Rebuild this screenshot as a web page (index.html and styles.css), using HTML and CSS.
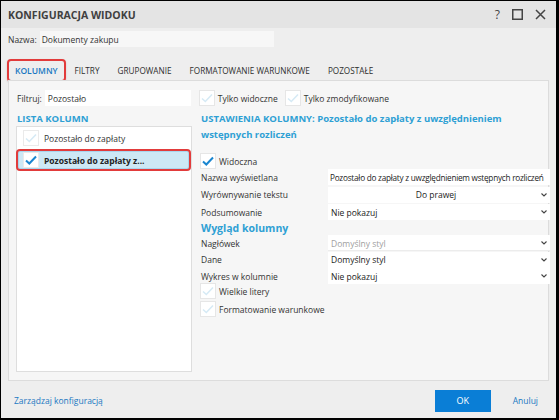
FILE: index.html
```html
<!DOCTYPE html>
<html lang="pl">
<head>
<meta charset="utf-8">
<link rel="stylesheet" href="styles.css">
</head>
<body>
<div class="dialog">
  <div class="titlebar">
    <div class="title">KONFIGURACJA WIDOKU</div>
    <div class="controls">
      <span class="ctl help">?</span>
      <svg class="ctl" width="11" height="11" viewBox="0 0 11 11"><rect x="0.75" y="0.75" width="9.5" height="9.5" fill="none" stroke="#444" stroke-width="1.5"/></svg>
      <svg class="ctl" width="11" height="11" viewBox="0 0 11 11"><path d="M1 1L10 10M10 1L1 10" stroke="#444" stroke-width="1.5"/></svg>
    </div>
  </div>

  <div class="name-row">
    <span class="lbl">Nazwa:</span>
    <div class="name-input">Dokumenty zakupu</div>
  </div>

  <div class="tabs">
    <div class="tab active">KOLUMNY</div>
    <div class="tab">FILTRY</div>
    <div class="tab">GRUPOWANIE</div>
    <div class="tab">FORMATOWANIE WARUNKOWE</div>
    <div class="tab">POZOSTAŁE</div>
  </div>

  <div class="panel">
    <div class="filter-row">
      <span class="lbl">Filtruj:</span>
      <div class="filter-input">Pozostało</div>
      <div class="chk-wrap first">
        <span class="chk"><svg width="12" height="10" viewBox="0 0 12 10"><path d="M1 5.5L4.3 8.5L11 1.5" fill="none" stroke="#d6eaf5" stroke-width="1.6"/></svg></span>
        <span class="lbl">Tylko widoczne</span>
      </div>
      <div class="chk-wrap">
        <span class="chk"><svg width="12" height="10" viewBox="0 0 12 10"><path d="M1 5.5L4.3 8.5L11 1.5" fill="none" stroke="#d6eaf5" stroke-width="1.6"/></svg></span>
        <span class="lbl">Tylko zmodyfikowane</span>
      </div>
    </div>

    <div class="columns">
      <div class="left">
        <div class="section-title">LISTA KOLUMN</div>
        <div class="list">
          <div class="item">
            <span class="chk"><svg width="12" height="10" viewBox="0 0 12 10"><path d="M1 5.5L4.3 8.5L11 1.5" fill="none" stroke="#d6eaf5" stroke-width="1.6"/></svg></span>
            <span>Pozostało do zapłaty</span>
          </div>
          <div class="item selected">
            <span class="chk"><svg width="12" height="10" viewBox="0 0 12 10"><path d="M1 5.5L4.3 8.5L11 1.5" fill="none" stroke="#1a86d0" stroke-width="2"/></svg></span>
            <span>Pozostało do zapłaty z...</span>
          </div>
        </div>
      </div>

      <div class="right">
        <div class="settings-title">USTAWIENIA KOLUMNY: Pozostało do zapłaty z uwzględnieniem wstępnych rozliczeń</div>
        <div class="chk-wrap visible">
          <span class="chk"><svg width="12" height="10" viewBox="0 0 12 10"><path d="M1 5.5L4.3 8.5L11 1.5" fill="none" stroke="#1a86d0" stroke-width="2"/></svg></span>
          <span class="lbl">Widoczna</span>
        </div>
        <div class="form">
          <div class="flabel">Nazwa wyświetlana</div>
          <div class="field text tight">Pozostało do zapłaty z uwzględnieniem wstępnych rozliczeń</div>
          <div class="flabel">Wyrównywanie tekstu</div>
          <div class="field select center"><span class="val">Do prawej</span><svg class="chev" width="6" height="4" viewBox="0 0 6 4"><path d="M0.5 0.5L3 3L5.5 0.5" fill="none" stroke="#444" stroke-width="1.1"/></svg></div>
          <div class="flabel">Podsumowanie</div>
          <div class="field select"><span class="val">Nie pokazuj</span><svg class="chev" width="6" height="4" viewBox="0 0 6 4"><path d="M0.5 0.5L3 3L5.5 0.5" fill="none" stroke="#444" stroke-width="1.1"/></svg></div>
        </div>
        <div class="sub-title">Wygląd kolumny</div>
        <div class="form form2">
          <div class="flabel">Nagłówek</div>
          <div class="field select disabled"><span class="val">Domyślny styl</span><svg class="chev" width="6" height="4" viewBox="0 0 6 4"><path d="M0.5 0.5L3 3L5.5 0.5" fill="none" stroke="#444" stroke-width="1.1"/></svg></div>
          <div class="flabel">Dane</div>
          <div class="field select"><span class="val">Domyślny styl</span><svg class="chev" width="6" height="4" viewBox="0 0 6 4"><path d="M0.5 0.5L3 3L5.5 0.5" fill="none" stroke="#444" stroke-width="1.1"/></svg></div>
          <div class="flabel">Wykres w kolumnie</div>
          <div class="field select"><span class="val">Nie pokazuj</span><svg class="chev" width="6" height="4" viewBox="0 0 6 4"><path d="M0.5 0.5L3 3L5.5 0.5" fill="none" stroke="#444" stroke-width="1.1"/></svg></div>
        </div>
        <div class="chk-wrap opt first-opt">
          <span class="chk"><svg width="12" height="10" viewBox="0 0 12 10"><path d="M1 5.5L4.3 8.5L11 1.5" fill="none" stroke="#d6eaf5" stroke-width="1.6"/></svg></span>
          <span class="lbl">Wielkie litery</span>
        </div>
        <div class="chk-wrap opt">
          <span class="chk"><svg width="12" height="10" viewBox="0 0 12 10"><path d="M1 5.5L4.3 8.5L11 1.5" fill="none" stroke="#d6eaf5" stroke-width="1.6"/></svg></span>
          <span class="lbl">Formatowanie warunkowe</span>
        </div>
      </div>
    </div>
  </div>

  <div class="footer">
    <a class="link">Zarządzaj konfiguracją</a>
    <div class="buttons">
      <div class="ok">OK</div>
      <a class="link cancel">Anuluj</a>
    </div>
  </div>
</div>
</body>
</html>
```

FILE: styles.css
```css
* { box-sizing: border-box; }
html, body { margin: 0; padding: 0; }
body { width: 559px; height: 420px; overflow: hidden; background: #fff; }

.dialog {
  width: 559px;
  height: 420px;
  border: 1px solid #000;
  border-right-width: 3px;
  border-bottom-width: 2px;
  background: #eeeeee;
  display: flex;
  flex-direction: column;
  font-family: "Open Sans", "Noto Sans", sans-serif;
  font-size: 8.5px;
  color: #333;
}

.titlebar {
  height: 27px;
  flex: none;
  background: #e4e4e4;
  display: flex;
  align-items: center;
  justify-content: space-between;
  padding: 0 10px 0 7px;
}
.title { font-weight: 700; font-size: 10.5px; color: #404040; }
.controls { display: flex; align-items: center; gap: 12px; }
.ctl.help { font-size: 12px; color: #444; line-height: 11px; }

.name-row {
  display: flex;
  align-items: center;
  padding: 3px 7px 0;
  height: 19px;
}
.name-input {
  margin-left: 3px;
  width: 234px;
  height: 16px;
  background: #f7f7f7;
  display: flex;
  align-items: center;
  padding-left: 2px;
}
.lbl { color: #333; }

.tabs {
  display: flex;
  align-items: center;
  margin-top: 12px;
  padding-left: 6px;
  height: 23px;
}
.tab {
  height: 23px;
  display: flex;
  align-items: center;
  padding: 0 9px;
  font-size: 8.2px;
  color: #2e2e2e;
}
.tab.active {
  color: #1a78c2;
  font-weight: 600;
  font-size: 8.5px;
  border: 2px solid #e23b3b;
  border-radius: 4px;
  box-shadow: 0 1px 2px rgba(0,0,0,0.15);
  padding: 0 6px;
}

.panel {
  margin: -2px 7px 0;
  height: 301px;
  border: 1px solid #dcdcdc;
  background: #f6f6f6;
  padding: 9px 0 0 8px;
  display: flex;
  flex-direction: column;
}

.filter-row { display: flex; align-items: center; height: 16px; }
.filter-input {
  margin-left: 3px;
  width: 146px;
  height: 16px;
  background: #fff;
  display: flex;
  align-items: center;
  padding-left: 3px;
}
.chk-wrap { display: flex; align-items: center; gap: 3px; }
.chk-wrap.first { margin-left: 8px; margin-right: 7px; }
.chk {
  width: 16px;
  height: 16px;
  background: #fff;
  border: 1px solid #e6e6e6;
  display: flex;
  align-items: center;
  justify-content: center;
  flex: none;
}

.columns { display: flex; margin-top: 6px; flex: 1; }
.left { width: 176px; margin-left: -1px; display: flex; flex-direction: column; padding-bottom: 8px; }
.section-title { font-weight: 700; color: #2ea0d4; font-size: 9.5px; padding-left: 1px; height: 14px; line-height: 14px; }
.list {
  flex: 1;
  background: #fff;
  border: 1px solid #dedede;
}
.item { display: flex; align-items: center; gap: 5px; height: 22px; padding-left: 6px; }
.item .chk { border-color: #eaeaea; }
.item.selected {
  margin: 0 0 0 -1px;
  width: 175px;
  border: 2px solid #e23b3b;
  border-radius: 4px;
  background: #cde8f5;
  font-weight: 700;
  color: #222;
  padding-left: 5px;
  box-shadow: inset 0 0 0 1px #a9d6ee;
}

.right { margin-left: 9px; width: 351px; display: flex; flex-direction: column; }
.settings-title {
  font-weight: 700;
  color: #2ea0d4;
  font-size: 9.5px;
  line-height: 16px;
  margin-top: -1px;
  width: 330px;
}
.chk-wrap.visible { margin-top: 10px; margin-left: -1px; }

.form {
  display: grid;
  grid-template-columns: 127px 222px;
  row-gap: 1.5px;
  margin-top: 0;
}
.flabel { height: 16px; display: flex; align-items: center; }
.field {
  height: 16px;
  background: #fff;
  display: flex;
  align-items: center;
  padding-left: 3px;
  white-space: nowrap;
  overflow: hidden;
  color: #222;
}
.field.tight { font-size: 8.2px; letter-spacing: -0.24px; padding-left: 2px; }
.field.select { justify-content: space-between; padding-right: 3px; }
.field.center .val { flex: 1; text-align: center; }
.field.disabled { color: #a0a0a0; box-shadow: inset 0 -1px 0 #ececec; }
.chev { flex: none; }

.sub-title { font-weight: 700; color: #2ea0d4; font-size: 10.5px; height: 16px; line-height: 16px; }
.form2 { row-gap: 0.5px; margin-top: -1px; }
.chk-wrap.opt { margin-top: 2px; margin-left: -1px; }
.chk-wrap.first-opt { margin-top: -1px; }

.footer {
  flex: 1;
  display: flex;
  align-items: center;
  justify-content: space-between;
  padding: 2px 18px 0 13px;
}
.link { color: #1a78c2; font-size: 8.5px; }
.buttons { display: flex; align-items: center; gap: 22px; }
.ok {
  width: 56px;
  height: 22px;
  background: #0a7ed6;
  color: #fff;
  display: flex;
  align-items: center;
  justify-content: center;
  font-size: 9px;
}
```
